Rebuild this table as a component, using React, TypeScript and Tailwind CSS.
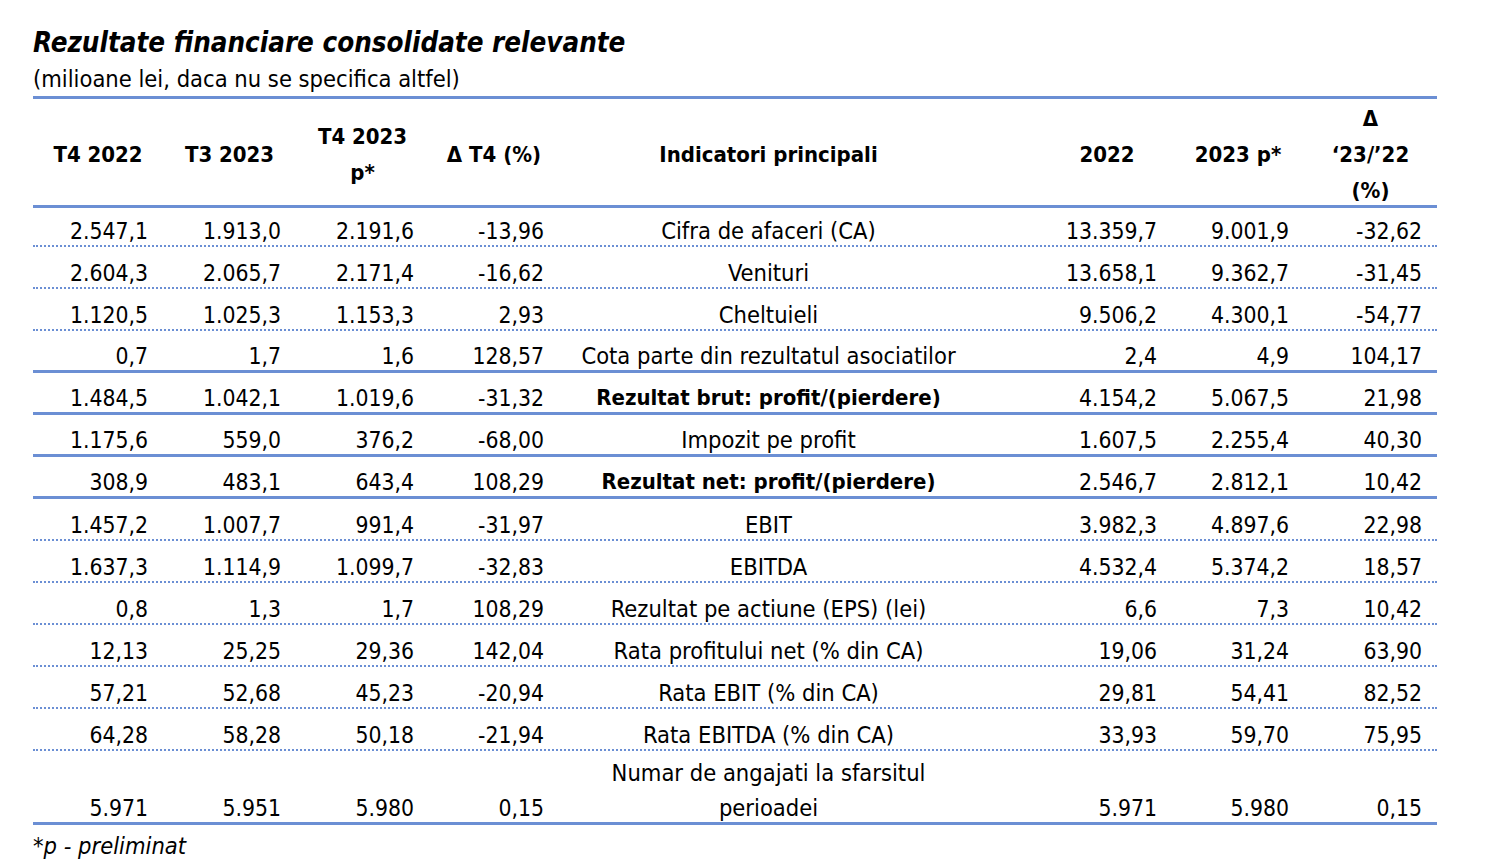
import React from "react";

type Row = {
  label: React.ReactNode;
  v: string[];
  bold?: boolean;
  line: "dot" | "solid";
};

const rows: Row[] = [
  { label: "Cifra de afaceri (CA)", v: ["2.547,1", "1.913,0", "2.191,6", "-13,96", "13.359,7", "9.001,9", "-32,62"], line: "dot" },
  { label: "Venituri", v: ["2.604,3", "2.065,7", "2.171,4", "-16,62", "13.658,1", "9.362,7", "-31,45"], line: "dot" },
  { label: "Cheltuieli", v: ["1.120,5", "1.025,3", "1.153,3", "2,93", "9.506,2", "4.300,1", "-54,77"], line: "dot" },
  { label: "Cota parte din rezultatul asociatilor", v: ["0,7", "1,7", "1,6", "128,57", "2,4", "4,9", "104,17"], line: "solid" },
  { label: "Rezultat brut: profit/(pierdere)", bold: true, v: ["1.484,5", "1.042,1", "1.019,6", "-31,32", "4.154,2", "5.067,5", "21,98"], line: "solid" },
  { label: "Impozit pe profit", v: ["1.175,6", "559,0", "376,2", "-68,00", "1.607,5", "2.255,4", "40,30"], line: "solid" },
  { label: "Rezultat net: profit/(pierdere)", bold: true, v: ["308,9", "483,1", "643,4", "108,29", "2.546,7", "2.812,1", "10,42"], line: "solid" },
  { label: "EBIT", v: ["1.457,2", "1.007,7", "991,4", "-31,97", "3.982,3", "4.897,6", "22,98"], line: "dot" },
  { label: "EBITDA", v: ["1.637,3", "1.114,9", "1.099,7", "-32,83", "4.532,4", "5.374,2", "18,57"], line: "dot" },
  { label: "Rezultat pe actiune (EPS) (lei)", v: ["0,8", "1,3", "1,7", "108,29", "6,6", "7,3", "10,42"], line: "dot" },
  { label: "Rata profitului net (% din CA)", v: ["12,13", "25,25", "29,36", "142,04", "19,06", "31,24", "63,90"], line: "dot" },
  { label: "Rata EBIT (% din CA)", v: ["57,21", "52,68", "45,23", "-20,94", "29,81", "54,41", "82,52"], line: "dot" },
  { label: "Rata EBITDA (% din CA)", v: ["64,28", "58,28", "50,18", "-21,94", "33,93", "59,70", "75,95"], line: "dot" },
];

const grid =
  "grid grid-cols-[130px_133px_133px_130px_419px_64px_130px_132px_133px]";

function Num({ children }: { children: React.ReactNode }) {
  return (
    <div className="text-right pr-[15px] whitespace-nowrap text-[22.75px]">{children}</div>
  );
}

export default function App() {
  return (
    <div className="bg-white w-[1488px] h-[866px] overflow-hidden text-black font-['DejaVu_Sans_Condensed','Liberation_Sans',sans-serif]">
      <div className="pl-[33px] pt-[25px] w-[1437px]">
        <div className="text-[27.5px] leading-[34px] font-bold italic whitespace-nowrap">
          Rezultate financiare consolidate relevante
        </div>
        <div className="text-[23.5px] leading-[30px] mt-[5px] whitespace-nowrap">
          (milioane lei, daca nu se specifica altfel)
        </div>

        {/* Header */}
        <div
          className={`${grid} mt-[2px] h-[112px] border-t-[3px] border-b-[3px] border-[#6b8fd4] font-bold text-[22px] leading-[36px]`}
        >
          <div className="flex items-center justify-center pt-[2px]">T4 2022</div>
          <div className="flex items-center justify-center pt-[2px]">T3 2023</div>
          <div className="flex items-center justify-center text-center pt-[2px]">
            T4 2023
            <br />
            p*
          </div>
          <div className="flex items-center justify-center pt-[2px]">Δ T4 (%)</div>
          <div className="flex items-center justify-center pt-[2px]">Indicatori principali</div>
          <div />
          <div className="flex items-center justify-center pt-[2px]">2022</div>
          <div className="flex items-center justify-center pt-[2px]">2023 p*</div>
          <div className="flex items-center justify-center text-center pt-[2px]">
            Δ
            <br />
            ‘23/’22
            <br />
            (%)
          </div>
        </div>

        {/* Body */}
        {rows.map((r, i) => (
          <div
            key={i}
            className={`${grid} items-end text-[23.5px] leading-[28px] ${i === 0 ? "h-[39px]" : "h-[42px]"} ${
              r.line === "dot"
                ? "border-b-2 border-dotted border-[#6b8fd4]"
                : "border-b-[3px] border-solid border-[#6b8fd4]"
            }`}
          >
            <Num>{r.v[0]}</Num>
            <Num>{r.v[1]}</Num>
            <Num>{r.v[2]}</Num>
            <Num>{r.v[3]}</Num>
            <div className={`text-center whitespace-nowrap ${r.bold ? "font-bold text-[22px]" : ""}`}>{r.label}</div>
            <div />
            <Num>{r.v[4]}</Num>
            <Num>{r.v[5]}</Num>
            <Num>{r.v[6]}</Num>
          </div>
        ))}

        <div
          className={`${grid} items-end text-[23.5px] leading-[28px] h-[74px] border-b-[3px] border-[#6b8fd4]`}
        >
          <Num>5.971</Num>
          <Num>5.951</Num>
          <Num>5.980</Num>
          <Num>0,15</Num>
          <div className="text-center whitespace-nowrap">
            <div>Numar de angajati la sfarsitul</div>
            <div className="mt-[7px]">perioadei</div>
          </div>
          <div />
          <Num>5.971</Num>
          <Num>5.980</Num>
          <Num>0,15</Num>
        </div>

        <div className="italic text-[23.5px] leading-[28px] mt-[7px] whitespace-nowrap">*p - preliminat</div>
      </div>
    </div>
  );
}
